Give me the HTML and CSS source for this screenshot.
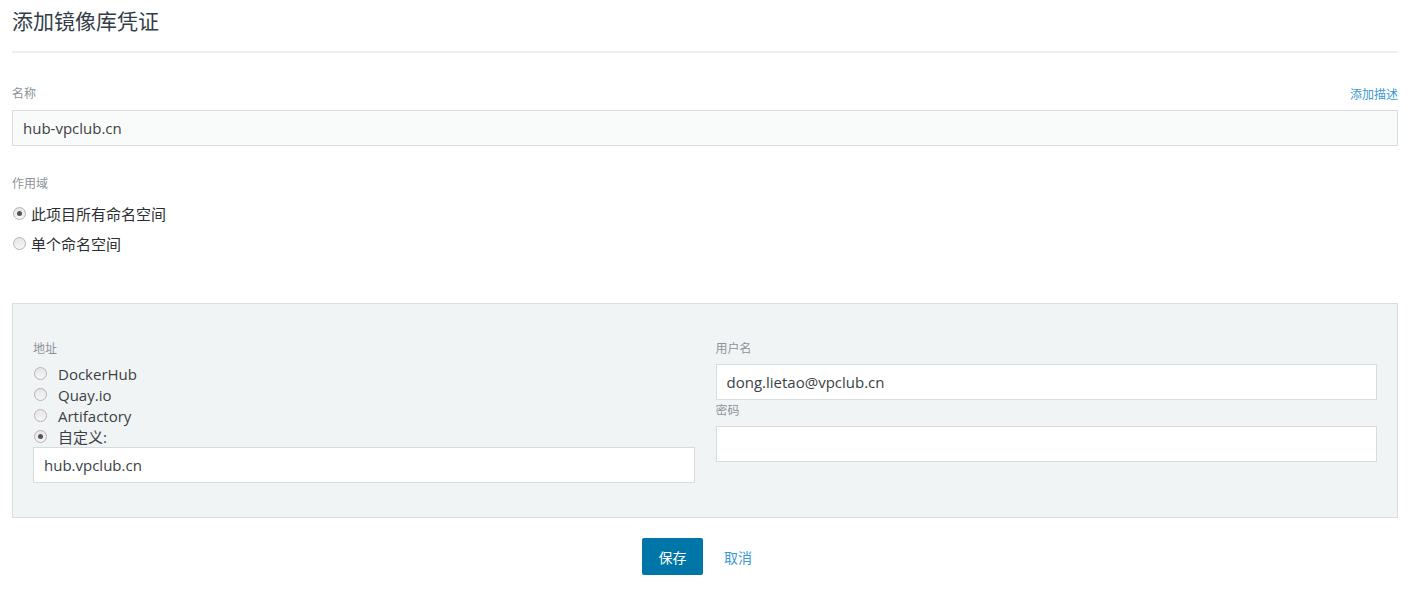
FILE: index.html
```html
<!DOCTYPE html>
<html lang="zh-CN">

<head>
    <meta charset="UTF-8">
    <title>添加镜像库凭证</title>
    <link rel="stylesheet" href="styles.css">
</head>

<body>
    <div class="page">
        <h1 class="page-title">添加镜像库凭证</h1>

        <div class="field">
            <div class="label-row">
                <label class="field-label">名称</label>
                <a class="link small" href="#">添加描述</a>
            </div>
            <div class="input input-name">hub-vpclub.cn</div>
        </div>

        <div class="field scope">
            <label class="field-label">作用域</label>
            <div class="radio-line"><span class="radio checked"></span>此项目所有命名空间</div>
            <div class="radio-line"><span class="radio"></span>单个命名空间</div>
        </div>

        <div class="box">
            <div class="col">
                <label class="field-label">地址</label>
                <div class="opt"><span class="radio"></span>DockerHub</div>
                <div class="opt"><span class="radio"></span>Quay.io</div>
                <div class="opt"><span class="radio"></span>Artifactory</div>
                <div class="opt"><span class="radio checked"></span>自定义:</div>
                <div class="input">hub.vpclub.cn</div>
            </div>
            <div class="col col-right">
                <label class="field-label">用户名</label>
                <div class="input">dong.lietao@vpclub.cn</div>
                <label class="field-label pw">密码</label>
                <div class="input"></div>
            </div>
        </div>

        <div class="footer">
            <button class="btn-save">保存</button>
            <a class="link cancel" href="#">取消</a>
        </div>
    </div>
</body>

</html>
```

FILE: styles.css
```css
body {
    margin: 0;
    font-family: "Open Sans", "Noto Sans CJK SC", sans-serif;
    color: #4f4f4f;
    background: white;
}

.page {
    padding: 0 24px 0 12px;
}

.page-title {
    font-size: 21px;
    font-weight: normal;
    color: #333d47;
    margin: 0;
    padding: 7px 0 16px;
    line-height: 28px;
    border-bottom: 2px solid #edf0f1;
}

.field-label {
    display: block;
    font-size: 12px;
    color: #8e9399;
    line-height: 16px;
}

.label-row {
    display: flex;
    justify-content: space-between;
    align-items: center;
    margin-top: 32px;
    margin-bottom: 7px;
}

.link {
    color: #3d98d3;
    text-decoration: none;
}

.small {
    font-size: 12px;
}

.input {
    height: 34px;
    line-height: 34px;
    border: 1px solid #d7dcdf;
    background: white;
    padding: 0 10px;
    font-size: 15px;
    color: #3b3f44;
}

.input-name {
    background: #f9fbfb;
}

.scope {
    margin-top: 30px;
}

.scope .field-label {
    margin-bottom: 6px;
}

.radio-line {
    display: flex;
    align-items: center;
    font-size: 15px;
    color: #2b2f33;
    height: 30px;
}

.radio {
    display: inline-block;
    flex-shrink: 0;
    width: 11px;
    height: 11px;
    border-radius: 50%;
    border: 1px solid #b4b4b4;
    background: linear-gradient(#e6e6e6, #f6f6f6);
    margin-left: 1px;
    margin-right: 5px;
    position: relative;
}

.radio.checked::after {
    content: "";
    position: absolute;
    left: 3px;
    top: 3px;
    width: 5px;
    height: 5px;
    border-radius: 50%;
    background: #555;
}

.box {
    margin-top: 45px;
    background: #f1f4f5;
    border: 1px solid #d8dfe2;
    padding: 37px 20px 34px;
    display: flex;
    gap: 21px;
}

.col {
    flex: 1;
}

.col .field-label {
    margin-bottom: 6px;
}

.col-right .pw {
    margin-top: 3px;
    margin-bottom: 7px;
}

.col-right .field-label:first-child {
    margin-bottom: 7px;
}

.opt {
    display: flex;
    align-items: center;
    font-size: 15px;
    color: #3b3f44;
    height: 21px;
}

.opt .radio {
    margin-left: 1px;
    margin-right: 11px;
}

.col .opt:last-of-type {
    margin-bottom: 4px;
}

.footer {
    display: flex;
    justify-content: center;
    align-items: center;
    gap: 21px;
    margin-top: 20px;
    padding-right: 16px;
}

.btn-save {
    background: #0075a8;
    color: white;
    border: none;
    border-radius: 2px;
    width: 61px;
    height: 37px;
    font-size: 14px;
    font-family: "Open Sans", "Noto Sans CJK SC", sans-serif;
}

.cancel {
    font-size: 14px;
}
```
